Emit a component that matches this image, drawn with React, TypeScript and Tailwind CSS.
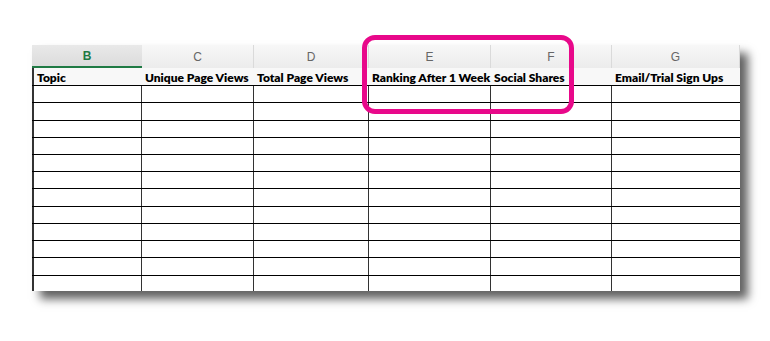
const COLS = [
  { letter: "B", title: "Topic", w: 110, selected: true },
  { letter: "C", title: "Unique Page Views", w: 112 },
  { letter: "D", title: "Total Page Views", w: 115 },
  { letter: "E", title: "Ranking After 1 Week", w: 122 },
  { letter: "F", title: "Social Shares", w: 121 },
  { letter: "G", title: "Email/Trial Sign Ups", w: 128 },
];

const ROWS = [17, 18, 17, 17, 17, 17, 18, 17, 17, 17, 18, 15];

export default function App() {
  return (
    <div className="relative h-[341px] w-[770px] overflow-hidden bg-white">
      <div className="ml-[32px] mt-[45px] w-[708px] bg-white shadow-[8px_8px_9px_rgba(0,0,0,0.62)]">
        {/* column letters */}
        <div className="flex h-[23px] bg-gradient-to-b from-[#f7f7f7] to-[#ececec]">
          {COLS.map((c) => (
            <div
              key={c.letter}
              style={{ width: c.w }}
              className={
                c.selected
                  ? "flex items-center justify-center border-b-2 border-[#1f7a44] bg-gradient-to-b from-[#e9e9e9] to-[#dcdcdc] font-['Liberation_Sans',sans-serif] text-[12px] font-bold text-[#1f7a44]"
                  : "flex items-center justify-center border-r border-[#dadada] font-['Liberation_Sans',sans-serif] text-[12px] text-[#666]"
              }
            >
              {c.letter}
            </div>
          ))}
        </div>
        {/* header titles */}
        <div className="flex h-[18px] border-b border-black bg-[#f8f8f8]">
          {COLS.map((c, i) => (
            <div
              key={c.title}
              style={{ width: c.w }}
              className={`flex items-end overflow-hidden whitespace-nowrap pb-[1px] pl-[3px] font-['Lato',sans-serif] text-[12px] font-extrabold leading-none text-black ${
                i === 0 ? "border-l-2 border-[#333]" : ""
              }`}
            >
              {c.title}
            </div>
          ))}
        </div>
        {/* body rows */}
        {ROWS.map((h, r) => (
          <div
            key={r}
            style={{ height: h }}
            className={`flex ${r < ROWS.length - 1 ? "border-b border-black" : ""}`}
          >
            {COLS.map((c, i) => (
              <div
                key={c.letter}
                style={{ width: c.w }}
                className={`${i === 0 ? "border-l-2 border-[#333]" : ""} ${
                  i < COLS.length - 1 ? "border-r border-[#333]" : ""
                }`}
              />
            ))}
          </div>
        ))}
      </div>
      {/* highlight box */}
      <div className="absolute left-[362px] top-[35px] h-[79px] w-[212px] rounded-[13px] border-[5px] border-[#e8088a]" />
    </div>
  );
}
